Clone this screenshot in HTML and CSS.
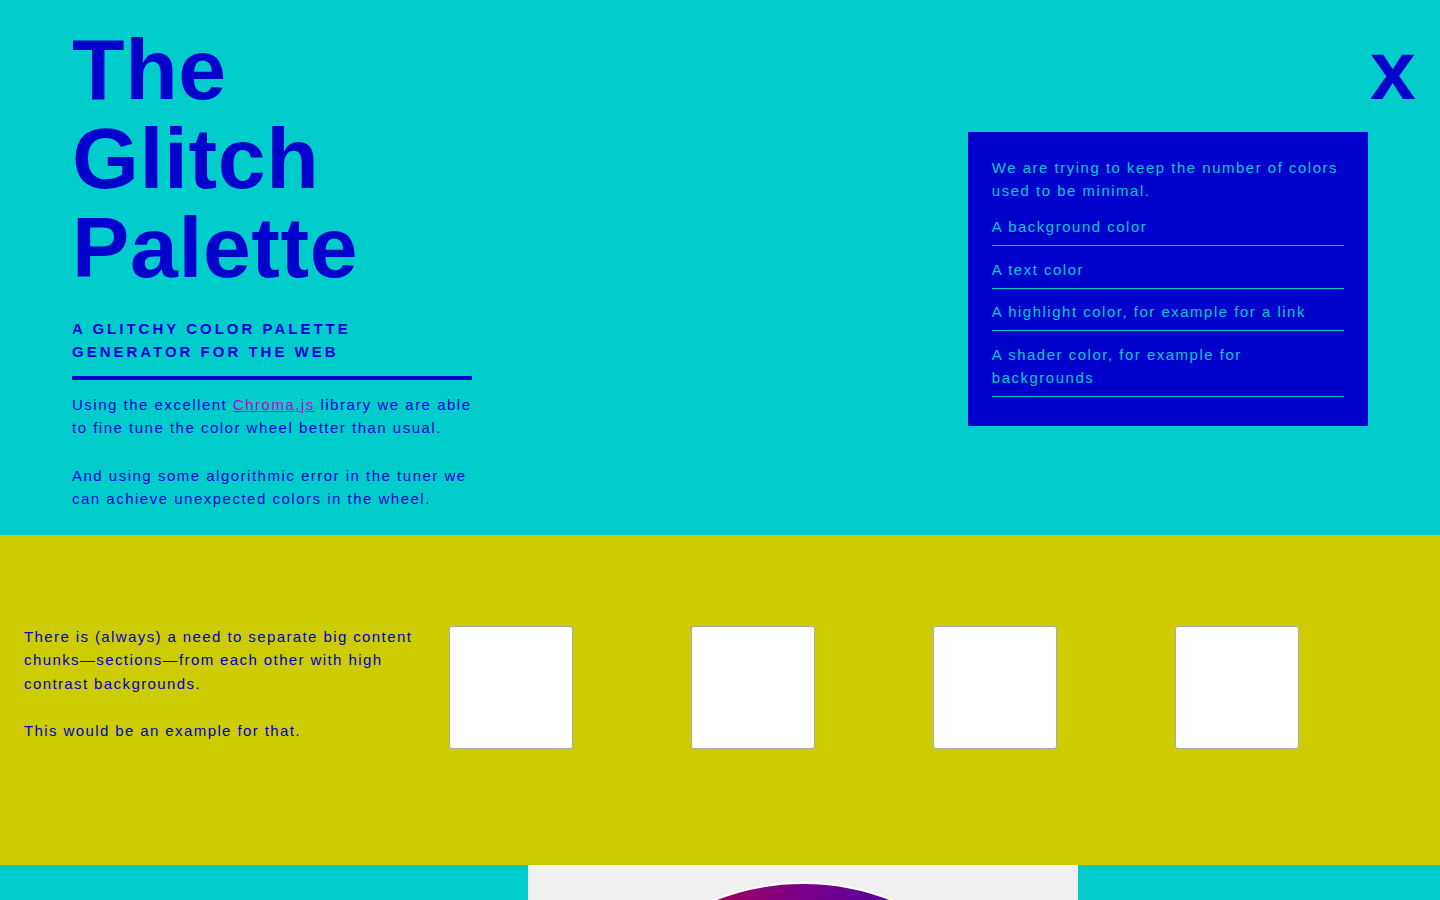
FILE: index.html
```html
<!DOCTYPE html>
<html lang="en">
<head>
<meta charset="utf-8">
<title>The Glitch Palette</title>
<link rel="stylesheet" href="styles.css">
</head>
<body>
<header class="hero">
  <div class="intro">
    <h1 class="title">The<br>Glitch<br>Palette</h1>
    <h2 class="subtitle">A glitchy color palette<br>generator for the web</h2>
    <hr class="rule">
    <p class="copy">Using the excellent <a href="#" class="link">Chroma.js</a> library we are able to fine tune the color wheel better than usual.</p>
    <p class="copy">And using some algorithmic error in the tuner we can achieve unexpected colors in the wheel.</p>
  </div>
  <aside class="info">
    <p class="info-text">We are trying to keep the number of colors used to be minimal.</p>
    <ul class="info-list">
      <li class="info-item">A background color</li>
      <li class="info-item">A text color</li>
      <li class="info-item">A highlight color, for example for a link</li>
      <li class="info-item">A shader color, for example for backgrounds</li>
    </ul>
  </aside>
  <button class="close" type="button">x</button>
</header>

<section class="band">
  <div class="band-text">
    <p class="copy">There is (always) a need to separate big content chunks—sections—from each other with high contrast backgrounds.</p>
    <p class="copy">This would be an example for that.</p>
  </div>
  <div class="swatches">
    <div class="swatch-cell"><div class="swatch"></div></div>
    <div class="swatch-cell"><div class="swatch"></div></div>
    <div class="swatch-cell"><div class="swatch"></div></div>
    <div class="swatch-cell"><div class="swatch"></div></div>
  </div>
</section>

<section class="wheel-section">
  <div class="wheel-panel">
    <div class="wheel"></div>
  </div>
</section>
</body>
</html>
```

FILE: styles.css
```css
* {
  box-sizing: border-box;
}

html, body {
  margin: 0;
  padding: 0;
}

body {
  background: #00cccc;
  color: #0000cc;
  font-family: "Liberation Sans", Arial, sans-serif;
  font-size: 15px;
  line-height: 23px;
  letter-spacing: 1.5px;
}

/* ---------- hero ---------- */
.hero {
  display: flex;
  align-items: flex-start;
  height: 535px;
  padding: 0 24px 0 72px;
  background: #00cccc;
}

.intro {
  width: 400px;
  flex: none;
}

.title {
  margin: 25px 0 0;
  font-size: 86px;
  line-height: 89px;
  font-weight: 700;
  letter-spacing: 0.6px;
  color: #0000cc;
}

.subtitle {
  margin: 25px 0 0;
  font-size: 15px;
  line-height: 23px;
  font-weight: 700;
  letter-spacing: 3px;
  text-transform: uppercase;
}

.rule {
  margin: 13px 0 0;
  height: 4px;
  border: 0;
  background: #0000cc;
}

.copy {
  margin: 0;
}

.copy + .copy {
  margin-top: 25px;
}

.intro .rule + .copy {
  margin-top: 13px;
}

.link {
  color: #cc00cc;
  text-decoration: underline;
}

.info {
  margin-left: auto;
  margin-top: 132px;
  width: 400px;
  flex: none;
  background: #0000cc;
  color: #00cccc;
  padding: 24px 24px 29px;
}

.info-text {
  margin: 0 0 1px;
}

.info-list {
  list-style: none;
  margin: 0;
  padding: 0;
}

.info-item {
  padding: 11.8px 0 7px;
  border-bottom: 1px solid #00cccc;
}

.close {
  flex: none;
  margin: 28.6px 0 0 2px;
  padding: 0;
  border: 0;
  background: transparent;
  color: #0000cc;
  font-family: "Liberation Sans", Arial, sans-serif;
  font-size: 83px;
  font-weight: 700;
  line-height: 83px;
  letter-spacing: 0;
  cursor: pointer;
}

/* ---------- band ---------- */
.band {
  display: flex;
  align-items: flex-start;
  height: 330px;
  padding: 90px 24px 0 24px;
  background: #cccc00;
}

.band-text {
  width: 400px;
  flex: none;
  margin-right: 24px;
  line-height: 23.3px;
  letter-spacing: 1.4px;
}

.band-text .copy + .copy {
  margin-top: 24px;
}

.swatches {
  flex: 1;
  display: grid;
  grid-template-columns: repeat(4, 1fr);
  margin-top: 1px;
}

.swatch {
  width: 124px;
  height: 123px;
  margin-left: 1px;
  background: #ffffff;
  border: 1px solid #aaaaaa;
  border-radius: 3px;
}

/* ---------- wheel ---------- */
.wheel-section {
  background: #00cccc;
  height: 560px;
}

.wheel-panel {
  margin-left: 528px;
  width: 550px;
  height: 100%;
  background: #f0f0f0;
  padding-top: 17px;
}

.wheel {
  width: 484px;
  height: 484px;
  margin: 0 auto;
  border-radius: 50%;
  border: 2px solid #ffffff;
  background: conic-gradient(
    from 0deg,
    #7a0088 0deg,
    #4d00a8 30deg,
    #0000cc 60deg,
    #0088aa 120deg,
    #22aa00 180deg,
    #aaa000 240deg,
    #cc2200 300deg,
    #b00050 330deg,
    #7a0088 360deg
  );
}
```
